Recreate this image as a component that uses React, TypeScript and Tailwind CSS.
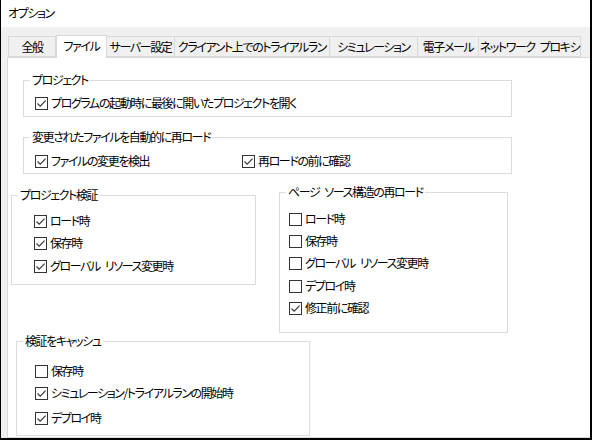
import React from "react"

const font = "font-['Meiryo_UI','Noto_Sans_CJK_JP',sans-serif] [font-feature-settings:'palt'] text-[12px] leading-[16px] tracking-[-1.4px] text-black"

// spaces get eaten by the negative tracking, so put them back as fixed gaps
function Txt({ s }: { s: string }) {
  const parts = s.split(" ")
  return (
    <>
      {parts.map((p, i) => (
        <React.Fragment key={i}>
          {i > 0 && <span className="inline-block w-[5px]" />}
          {p}
        </React.Fragment>
      ))}
    </>
  )
}

function Check({ checked }: { checked?: boolean }) {
  return (
    <span className="w-[13px] h-[13px] border border-[#333333] bg-white flex items-center justify-center shrink-0">
      {checked && (
        <svg width="11" height="11" viewBox="0 0 11 11">
          <path d="M1.5 5.5 L4.2 8.2 L9.6 2.6" fill="none" stroke="#333333" strokeWidth="1.1" />
        </svg>
      )}
    </span>
  )
}

function Row({ label, checked, className = "" }: { label: string; checked?: boolean; className?: string }) {
  return (
    <div className={"flex items-center h-[22px] gap-[3px] " + className}>
      <Check checked={checked} />
      <span className="whitespace-nowrap"><Txt s={label} /></span>
    </div>
  )
}

function Group({ title, className = "", children }: { title: string; className?: string; children: React.ReactNode }) {
  return (
    <fieldset className={"border border-[#dcdcdc] p-0 m-0 " + className}>
      <legend className="ml-[6px] px-[2px] whitespace-nowrap"><Txt s={title} /></legend>
      {children}
    </fieldset>
  )
}

const tabs = [
  { label: "全般", w: "w-[48px]" },
  { label: "ファイル", w: "w-[51px]", active: true },
  { label: "サーバー設定", w: "w-[69px]" },
  { label: "クライアント上でのトライアルラン", w: "w-[156px]" },
  { label: "シミュレーション", w: "w-[89px]" },
  { label: "電子メール", w: "w-[62px]" },
  { label: "ネットワーク プロキシ", w: "w-[103px]" },
]

export default function App() {
  return (
    <div className={"w-[592px] h-[440px] bg-white border-l border-r-2 border-b-2 border-black flex flex-col overflow-hidden " + font}>
      <div className="h-[27px] shrink-0 pl-[7px] pt-[5px]">オプション</div>
      <div className="flex-1 bg-[#f0f0f0] flex flex-col pt-[8px]">
        <div className="flex items-end ml-[7px] h-[22px] relative z-10">
          {tabs.map((t) => (
            <div
              key={t.label}
              className={
                t.w +
                " flex items-center justify-center border border-[#d9d9d9] whitespace-nowrap " +
                (t.active ? "h-[23px] bg-white border-b-0 -mb-px pb-[2px]" : "h-[21px] bg-[#f0f0f0] -ml-px first:ml-0")
              }
            >
              <Txt s={t.label} />
            </div>
          ))}
        </div>
        <div className="flex-1 ml-[6px] -mr-px border border-[#d9d9d9] bg-white flex flex-col">
          <Group title="プロジェクト" className="mt-[14px] ml-[15px] w-[489px]">
            <div className="pt-[4px] pb-[2px] pl-[11px]">
              <Row label="プログラムの起動時に最後に開いたプロジェクトを開く" checked />
            </div>
          </Group>
          <Group title="変更されたファイルを自動的に再ロード" className="mt-[12px] ml-[15px] w-[489px]">
            <div className="pt-[5px] pb-[1px] pl-[11px] flex">
              <Row label="ファイルの変更を検出" checked className="w-[207px]" />
              <Row label="再ロードの前に確認" checked />
            </div>
          </Group>
          <div className="flex items-start">
            <Group title="プロジェクト検証" className="mt-[13px] ml-[3px] w-[245px]">
              <div className="pt-[7px] pb-[7px] pl-[22px] flex flex-col">
                <Row label="ロード時" checked />
                <Row label="保存時" checked />
                <Row label="グローバル リソース変更時" checked className="mt-[1px]" />
              </div>
            </Group>
            <Group title="ページ ソース構造の再ロード" className="mt-[10px] ml-[23px] w-[229px]">
              <div className="pt-[8px] pb-[13px] pl-[9px] flex flex-col">
                <Row label="ロード時" />
                <Row label="保存時" />
                <Row label="グローバル リソース変更時" />
                <Row label="デプロイ時" className="mt-[1px]" />
                <Row label="修正前に確認" checked />
              </div>
            </Group>
          </div>
          <Group title="検証をキャッシュ" className="mt-0 ml-[8px] w-[294px]">
            <div className="pt-[11px] pb-[6px] pl-[18px] flex flex-col">
              <Row label="保存時" />
              <Row label="シミュレーション/トライアルランの開始時" checked />
              <Row label="デプロイ時" checked className="mt-[3px]" />
            </div>
          </Group>
        </div>
      </div>
    </div>
  )
}
